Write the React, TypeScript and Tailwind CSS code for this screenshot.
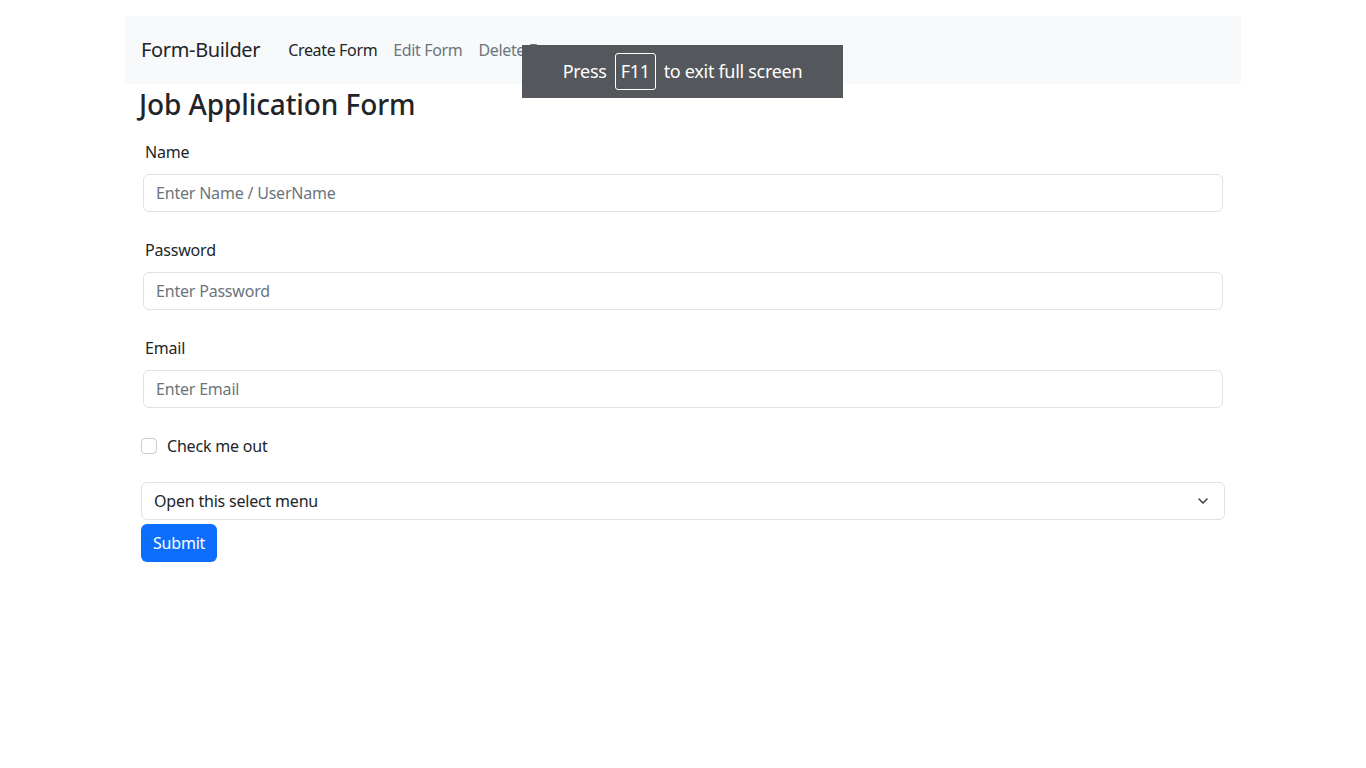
import { ChevronDown } from 'lucide-react';

const fieldCls =
  'block w-full h-[38px] rounded-[6px] border border-[#dee2e6] bg-white px-3 text-[16px] tracking-[-0.2px] text-[#212529] placeholder:text-[#6c757d] outline-none';

function Field({ label, placeholder, type = 'text' }: { label: string; placeholder: string; type?: string }) {
  return (
    <div className="px-[2px] mb-[26px]">
      <label className="block pl-[2px] mb-[10px] text-[16px] leading-6 tracking-[-0.2px] text-[#212529]">{label}</label>
      <input type={type} placeholder={placeholder} className={fieldCls} />
    </div>
  );
}

export default function App() {
  return (
    <div className="relative min-h-[768px] bg-white font-['Noto_Sans',sans-serif] text-[#212529]">
      <div className="pt-4 px-[125px]">
        {/* Навбар */}
        <nav className="flex items-center h-[68px] bg-[#f8f9fa] px-4 tracking-[-0.35px]">
          <span className="text-[20px] leading-[30px] mr-7 text-[#212529]">Form-Builder</span>
          <div className="flex items-center text-[16px]">
            <a className="mr-4 text-[#212529]">Create Form</a>
            <a className="mr-4 text-[#6c757d]">Edit Form</a>
            <a className="text-[#6c757d]">Delete Form</a>
          </div>
        </nav>

        <div className="px-4">
          <h3 className="-ml-[2px] mt-[3px] mb-[19px] text-[28px] leading-[34px] font-medium tracking-[-0.1px]">
            Job Application Form
          </h3>

          <Field label="Name" placeholder="Enter Name / UserName" />
          <Field label="Password" placeholder="Enter Password" type="password" />
          <Field label="Email" placeholder="Enter Email" type="email" />

          <div className="flex items-center gap-[10px] mb-[24px] h-6">
            <input type="checkbox" className="w-4 h-4 appearance-none rounded-[4px] border border-[#c7ccd1] bg-white" />
            <span className="text-[16px] tracking-[-0.2px]">Check me out</span>
          </div>

          <div className="relative mb-[4px]">
            <div className="flex items-center h-[38px] rounded-[6px] border border-[#dee2e6] px-3 text-[16px] tracking-[-0.2px]">
              Open this select menu
            </div>
            <ChevronDown className="absolute right-[14px] top-[11px] w-4 h-4 text-[#343a40]" strokeWidth={2.2} />
          </div>

          <button className="h-[38px] px-3 rounded-[6px] bg-[#0d6efd] text-white text-[16px] tracking-[-0.2px]">
            Submit
          </button>
        </div>
      </div>

      {/* Оверлей полноэкранного режима */}
      <div className="absolute left-[522px] top-[45px] w-[321px] h-[53px] bg-[#54575b] flex items-center justify-center gap-2 text-white text-[18px] tracking-[-0.3px]">
        <span>Press</span>
        <span className="border border-white rounded-[3px] px-[5px] h-[37px] flex items-center">F11</span>
        <span>to exit full screen</span>
      </div>
    </div>
  );
}
